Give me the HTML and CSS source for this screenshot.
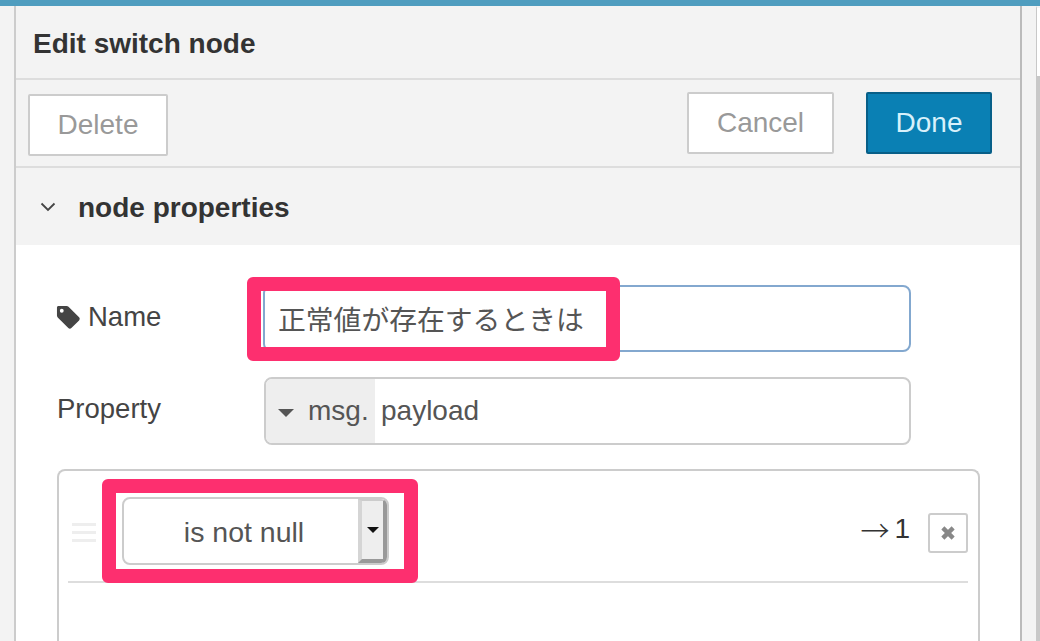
FILE: index.html
```html
<!DOCTYPE html>
<html lang="ja">
<head>
<meta charset="utf-8">
<title>Edit switch node</title>
<link rel="stylesheet" href="styles.css">
</head>
<body>
<div class="topbar"></div>
<div class="shell">
  <div class="gutter"></div>
  <main class="panel">
    <header class="title-bar"><h1>Edit switch node</h1></header>
    <div class="toolbar">
      <button class="btn btn-delete">Delete</button>
      <div class="toolbar-right">
        <button class="btn btn-cancel">Cancel</button>
        <button class="btn btn-done">Done</button>
      </div>
    </div>
    <div class="section-head">
      <svg class="chevron" viewBox="0 0 16 10" width="16" height="10"><path d="M1.5 1.5 8 8l6.500-6.500" fill="none" stroke="#444" stroke-width="1.800"/></svg>
      <h2>node properties</h2>
    </div>
    <form class="form">
      <div class="row row-name">
        <label class="label label-name">
          <svg class="tag" viewBox="0 0 26 26" width="25" height="25"><path fill-rule="evenodd" d="M1 2.500C1 1.700 1.700 1 2.500 1H11c.8 0 1.500.3 2 .8l11 11c.9.900.9 2.300 0 3.200l-8 8c-.9.900-2.300.9-3.200 0l-11-11c-.5-.5-.8-1.200-.8-2zM6 4a2 2 0 1 0 0 4 2 2 0 0 0 0-4z" fill="#444"/></svg>
          <span>Name</span>
        </label>
        <div class="name-input">正常値が存在するときは</div>
        <div class="highlight highlight-name"></div>
      </div>
      <div class="row row-prop">
        <label class="label">Property</label>
        <div class="typed-input">
          <span class="type-chip"><i class="caret"></i>msg.</span>
          <span class="type-value">payload</span>
        </div>
      </div>
      <div class="rules">
        <div class="rule">
          <div class="handle"><i></i><i></i><i></i></div>
          <div class="select">
            <span class="select-text">is not null</span>
            <span class="select-btn"><i class="caret caret-black"></i></span>
          </div>
          <span class="output"><span class="arrow">→</span> 1</span>
          <span class="remove">
            <svg viewBox="0 0 14 14" width="16" height="16"><path d="M2.500 2.500l9 9m0-9l-9 9" stroke="#888" stroke-width="3.800"/></svg>
          </span>
          <div class="highlight highlight-rule"></div>
        </div>
      </div>
    </form>
  </main>
  <div class="side"><div class="side-box"></div><div class="side-rest"></div></div>
</div>
</body>
</html>
```
FILE: styles.css
```css
* { box-sizing: border-box; }
html, body { margin: 0; height: 641px; overflow: hidden; }
body {
  background: #f3f3f3;
  font-family: "Liberation Sans", Arial, sans-serif;
  color: #444;
}
.topbar { height: 6px; background: #4f9dbf; }
.shell { display: flex; height: 635px; }
.gutter { width: 14px; background: #f3f3f3; flex: none; }
.panel {
  width: 1008px;
  flex: none;
  border-left: 2px solid #ccc;
  border-right: 2px solid #bbb;
  background: #fff;
  display: flex;
  flex-direction: column;
}
.side { flex: 1; display: flex; flex-direction: column; align-items: flex-end; }
.side-box { width: 4px; height: 70px; background: #fff; border-left: 1px solid #c8c8c8; border-top: 2px solid #f3f3f3; }
.side-rest { width: 4px; flex: 1; background: #c8c8c8; }

.title-bar {
  height: 74px;
  background: #f3f3f3;
  border-bottom: 2px solid #ddd;
  padding-left: 17px;
  display: flex;
  align-items: center;
}
h1 { margin: 3px 0 0; font-size: 28px; font-weight: 700; color: #333; }

.toolbar {
  height: 88px;
  background: #f3f3f3;
  border-bottom: 2px solid #ddd;
  padding: 14px 28px 0 12px;
  display: flex;
  justify-content: space-between;
}
.toolbar-right { display: flex; gap: 32px; margin-top: -2px; }
.btn {
  height: 62px;
  font: 28px "Liberation Sans", Arial, sans-serif;
  border: 2px solid #ccc;
  border-radius: 2px;
  background: #fff;
  color: #999;
  padding: 0;
}
.btn-delete { width: 140px; }
.btn-cancel { width: 147px; }
.btn-done { width: 126px; background: #0a80b4; border-color: #075f88; color: #d8f1fb; }

.section-head {
  height: 77px;
  background: #f3f3f3;
  display: flex;
  align-items: center;
  padding-left: 24px;
}
.chevron { margin-right: 22px; }
h2 { margin: 2px 0 0; font-size: 28px; font-weight: 700; color: #333; }

.form { padding: 40px 40px 0 41px; display: flex; flex-direction: column; flex: 1; }
.row { position: relative; display: flex; align-items: center; }
.label { width: 206px; flex: none; margin-top: -4px; font-size: 27.500px; color: #444; display: flex; align-items: center; gap: 7px; }
.label-name { margin-left: -1px; width: 207px; }
.row-name { height: 68px; }
.row-prop { height: 68px; margin-top: 24px; }
.name-input {
  width: 648px;
  height: 67px;
  margin-top: -1px;
  border: 2px solid #83a8cf;
  border-radius: 8px;
  padding: 0 0 2px 13px;
  display: flex;
  align-items: center;
  font: 27.800px "Noto Sans CJK JP", sans-serif;
  color: #555;
  background: #fff;
  line-height: 60px;
}
.typed-input {
  width: 647px;
  height: 68px;
  margin-left: 1px;
  border: 2px solid #ccc;
  border-radius: 8px;
  display: flex;
  align-items: stretch;
  font-size: 28px;
  color: #555;
  overflow: hidden;
}
.type-chip {
  width: 109px;
  background: #eee;
  display: flex;
  align-items: center;
  padding-left: 12px;
}
.caret {
  width: 0;
  height: 0;
  border-left: 8px solid transparent;
  border-right: 8px solid transparent;
  border-top: 8px solid #555;
  margin: 4px 14px 0 0;
}
.type-value { padding-left: 6px; display: flex; align-items: center; }

.highlight {
  position: absolute;
  border: 14px solid #fd2f6f;
  border-radius: 6px;
  pointer-events: none;
}
.highlight-name { left: 190px; top: -8px; width: 373px; height: 84px; }

.rules {
  margin-top: 24px;
  flex: 1;
  border: 2px solid #ccc;
  border-bottom: 0;
  border-radius: 8px 8px 0 0;
  padding: 0 10px 0 9px;
}
.rule {
  position: relative;
  height: 112px;
  border-bottom: 2px solid #ddd;
  display: flex;
  align-items: center;
  padding-left: 4px;
}
.handle { width: 24px; display: flex; flex-direction: column; gap: 5px; margin-top: 12px; margin-right: 26px; }
.handle i { height: 3px; background: #eee; display: block; }
.select {
  width: 267px;
  height: 68px;
  margin-top: 9px;
  border: 2px solid #ccc;
  border-radius: 8px;
  display: flex;
  overflow: hidden;
  background: #fff;
}
.select-text { flex: 1; text-align: center; font-size: 28.500px; color: #555; line-height: 66px; margin-left: 6px; }
.select-btn {
  width: 29px;
  background: #eee;
  border-left: 4px solid #d5d5d5;
  border-top: 2px solid #ccc;
  border-right: 4px solid #999;
  border-bottom: 4px solid #999;
  display: flex;
  align-items: center;
  justify-content: center;
}
.caret-black { border-left-width: 6px; border-right-width: 6px; border-top: 6px solid #111; margin: 0; }
.output { margin-left: auto; margin-top: 6px; font-size: 28px; color: #333; display: flex; align-items: center; gap: 5px; }
.arrow { font-family: "Noto Sans CJK JP", sans-serif; font-size: 29px; line-height: 32px; font-weight: 300; }
.remove {
  width: 40px;
  height: 40px;
  margin-left: 18px;
  margin-top: 14px;
  border: 2px solid #ccc;
  border-radius: 3px;
  display: flex;
  align-items: center;
  justify-content: center;
}
.highlight-rule { left: 34px; top: 8px; width: 316px; height: 104px; }
```
